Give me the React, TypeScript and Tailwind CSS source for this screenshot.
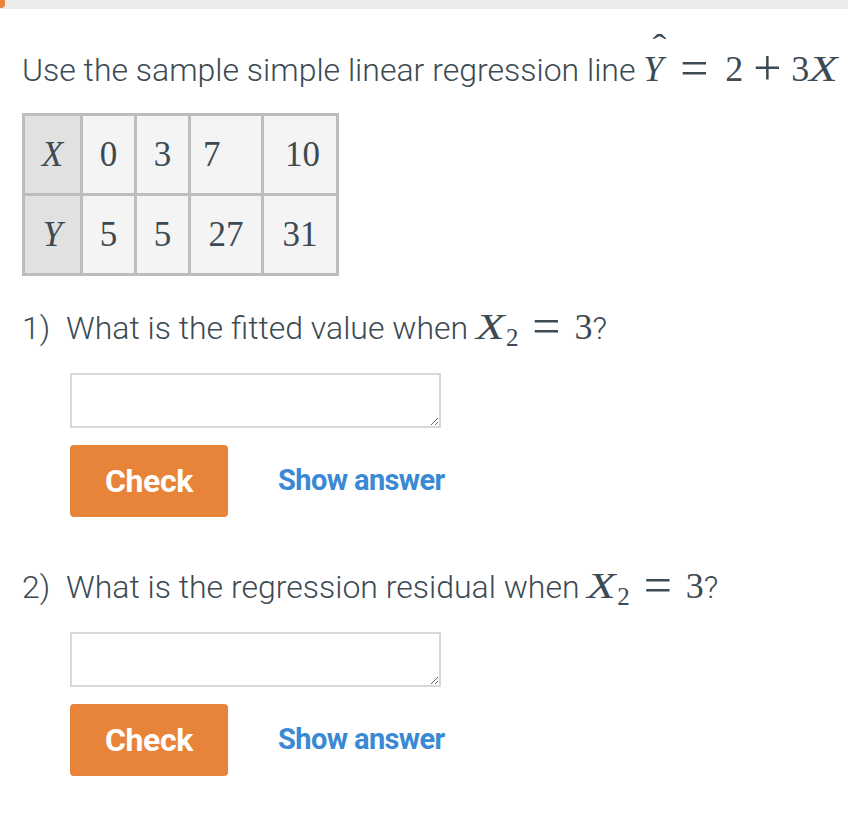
import React from 'react'

const math = { fontFamily: '"Liberation Serif", "DejaVu Serif", serif' }

function Op({ children, w }: { children: React.ReactNode; w: string }) {
  return (
    <span className={`inline-block ${w} text-center text-[50px] leading-[0] relative top-[4px]`}>{children}</span>
  )
}

function Hat({ children }: { children: React.ReactNode }) {
  return (
    <span className="relative inline-block italic">
      {children}
      <span className="absolute left-[11px] top-[-22px] not-italic text-[32px] inline-block scale-x-[1.3]">ˆ</span>
    </span>
  )
}

function Question({ n, text, mt }: { n: number; text: string; mt: string }) {
  return (
    <div className={mt}>
      <div className="flex items-baseline text-[32px] leading-[40px] font-light">
        <span className="w-[44px] shrink-0">{n})</span>
        <span className="whitespace-nowrap">
          {text}{' '}
          <span style={math} className="text-[36px] leading-none font-normal">
            <span className="italic inline-block scale-x-[1.3] origin-left mr-[8px]">X</span>
            <span className="inline-block text-[25px] relative top-[7px]">2</span>
            <Op w="w-[56px]">=</Op>3
          </span>
          ?
        </span>
      </div>
      <div className="pl-[48px] mt-[25px]">
        <textarea className="block w-[371px] h-[55px] border-2 border-[#d4d9dc] bg-white outline-none" />
        <div className="flex items-center mt-[17px]">
          <button className="w-[158px] h-[72px] rounded-[4px] bg-[#e8833a] text-white font-bold text-[32px] tracking-[-0.4px]">
            Check
          </button>
          <button className="ml-[50px] text-[#3a89d4] font-bold text-[29px] tracking-[-0.6px]">
            Show answer
          </button>
        </div>
      </div>
    </div>
  )
}

export default function App() {
  const xs = ['0', '3', '7', '10']
  const ys = ['5', '5', '27', '31']
  const widths = ['w-[54px]', 'w-[54px]', 'w-[73px]', 'w-[75px]']
  return (
    <div className="w-[848px] h-[818px] bg-white text-[#3c4a53] overflow-hidden" style={{ fontFamily: 'Roboto, "Noto Sans", sans-serif' }}>
      <div className="relative h-[9px] bg-[#ececec]">
        <div className="absolute left-0 top-0 w-[5px] h-[8px] bg-[#e8833a] rounded-br-[4px]" />
      </div>
      <div className="pl-[22px] pt-[41px]">
        <p className="text-[32px] leading-[40px] whitespace-nowrap font-light">
          Use the sample simple linear regression line{' '}
          <span style={math} className="text-[36px] leading-none font-normal">
            <Hat>Y</Hat>
            <Op w="w-[62px]">=</Op>2<Op w="w-[48px]">+</Op>3
            <span className="italic inline-block scale-x-[1.3] origin-left">X</span>
          </span>
        </p>
        <table style={math} className="mt-[23px] border-collapse border-[3px] border-[#bdbdbd] text-[35px] leading-none">
          <tbody>
            <tr className="h-[80px]">
              <td className="w-[58px] bg-[#e1e1e1] border-[3px] border-[#bdbdbd] text-center italic">X</td>
              {xs.map((v, i) => (
                <td key={i} className={`${widths[i]} bg-[#f4f4f4] border-[3px] border-[#bdbdbd] ${i === 3 ? 'text-right pr-[16px]' : i === 2 ? 'text-left pl-[12px]' : 'text-center'}`}>
                  {v}
                </td>
              ))}
            </tr>
            <tr className="h-[80px]">
              <td className="bg-[#e1e1e1] border-[3px] border-[#bdbdbd] text-center italic">Y</td>
              {ys.map((v, i) => (
                <td key={i} className="bg-[#f4f4f4] border-[3px] border-[#bdbdbd] text-center">
                  {v}
                </td>
              ))}
            </tr>
          </tbody>
        </table>
        <Question n={1} text="What is the fitted value when" mt="mt-[32px]" />
        <Question n={2} text="What is the regression residual when" mt="mt-[50px]" />
      </div>
    </div>
  )
}
